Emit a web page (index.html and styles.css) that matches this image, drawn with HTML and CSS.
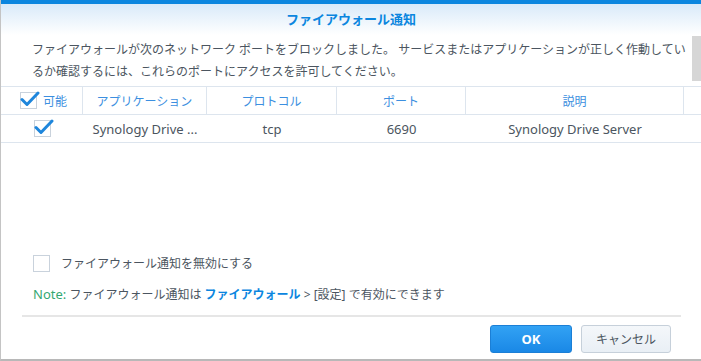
FILE: index.html
```html
<!DOCTYPE html>
<html>
  <head>
    <meta charset="utf-8">
    <title>ファイアウォール通知</title>
    <link rel="stylesheet" href="styles.css">
  </head>
  <body>
    <div class="dialog">
      <div class="topbar"></div>
      <header class="dlg-header">
        <h1 class="dlg-title">ファイアウォール通知</h1>
      </header>
      <div class="scroll-thumb"></div>

      <p class="desc">ファイアウォールが次のネットワーク ポートをブロックしました。 サービスまたはアプリケーションが正しく作動しているか確認するには、これらのポートにアクセスを許可してください。</p>

      <div class="grid">
        <div class="row head">
          <div class="cell c-enable">
            <span class="check">
              <svg width="20" height="18" viewBox="0 0 20 18"><rect x="0.5" y="1.5" width="16" height="16" fill="#fff" stroke="#c9d2dc"/><path d="M2 8.5 L7 13.5 L18 2" fill="none" stroke="#1e86dc" stroke-width="3" stroke-linecap="round" stroke-linejoin="round"/></svg>
            </span>
            可能
          </div>
          <div class="cell">アプリケーション</div>
          <div class="cell">プロトコル</div>
          <div class="cell">ポート</div>
          <div class="cell">説明</div>
          <div class="cell"></div>
        </div>
        <div class="row data">
          <div class="cell">
            <span class="check">
              <svg width="20" height="18" viewBox="0 0 20 18"><rect x="0.5" y="1.5" width="16" height="16" fill="#fff" stroke="#c9d2dc"/><path d="M2 8.5 L7 13.5 L18 2" fill="none" stroke="#1e86dc" stroke-width="3" stroke-linecap="round" stroke-linejoin="round"/></svg>
            </span>
          </div>
          <div class="cell">Synology Drive ...</div>
          <div class="cell">tcp</div>
          <div class="cell">6690</div>
          <div class="cell">Synology Drive Server</div>
          <div class="cell"></div>
        </div>
      </div>

      <div class="options">
        <label class="opt">
          <span class="box"></span>
          ファイアウォール通知を無効にする
        </label>
        <p class="note"><span class="note-tag">Note:</span> ファイアウォール通知は <b class="link">ファイアウォール</b> &gt; [設定] で有効にできます</p>
      </div>

      <div class="sep"></div>

      <footer class="dlg-footer">
        <button class="btn btn-ok">OK</button>
        <button class="btn btn-cancel">キャンセル</button>
      </footer>
    </div>
  </body>
</html>
```

FILE: styles.css
```css
* {
  box-sizing: border-box;
  margin: 0;
}
body {
  background: #fff;
  font-family: "Noto Sans", "Noto Sans CJK JP", sans-serif;
  font-size: 12px;
  color: #4b5560;
}
.dialog {
  position: relative;
  width: 701px;
  height: 361px;
  border-left: 1px solid #c4c4c4;
  border-bottom: 2px solid #b8b8b8;
  display: flex;
  flex-direction: column;
}
.topbar {
  height: 4px;
  background: #0b86df;
}
.dlg-header {
  height: 31px;
  background: linear-gradient(#d9eaf9, #ffffff);
  display: flex;
  align-items: center;
  justify-content: center;
}
.dlg-title {
  font-size: 13px;
  font-weight: 700;
  color: #0b86df;
  margin-top: -2px;
}
.scroll-thumb {
  position: absolute;
  right: 0;
  top: 36px;
  width: 9px;
  height: 45px;
  background: #d6d6d6;
}
.desc {
  padding: 4px 12px 0 31px;
  line-height: 22px;
  height: 51px;
}
.grid {
  border-top: 1px solid #dde5ee;
}
.row {
  display: grid;
  grid-template-columns: 82px 124px 130px 129px 218px 17px;
  border-bottom: 1px solid #dde5ee;
}
.row.head {
  height: 28px;
  color: #3c8fe0;
}
.row.data {
  height: 28px;
  font-size: 13px;
}
.cell {
  display: flex;
  align-items: center;
  justify-content: center;
  border-right: 1px solid #dde5ee;
  white-space: nowrap;
}
.row.data .cell {
  border-right: none;
  color: #4b5560;
}
.row.head .cell:last-child {
  border-right: none;
}
.c-enable {
  justify-content: flex-start;
  padding-left: 19px;
  gap: 3px;
}
.check {
  display: inline-flex;
  margin-top: -2px;
}
.row.data .cell:first-child {
  padding-left: 4px;
}
.options {
  padding: 111px 0 0 32px;
  height: 172px;
}
.opt {
  display: flex;
  align-items: center;
  gap: 11px;
  height: 18px;
}
.box {
  width: 17px;
  height: 17px;
  border: 1px solid #c9d2dc;
  background: #fff;
}
.note {
  margin-top: 13px;
  line-height: 18px;
}
.note-tag {
  color: #32a872;
  font-size: 13px;
}
.link {
  color: #0b86df;
  font-weight: 700;
}
.sep {
  margin: 0 20px 0 21px;
  height: 2px;
  background: #e6e6e6;
}
.dlg-footer {
  display: flex;
  justify-content: flex-end;
  gap: 9px;
  padding: 8px 30px 0 0;
}
.btn {
  height: 28px;
  border-radius: 3px;
  font-family: "Noto Sans", "Noto Sans CJK JP", sans-serif;
  font-size: 12px;
}
.btn-ok {
  width: 82px;
  background: linear-gradient(#32a2f4, #1a88e6);
  border: 1px solid #1b7fd6;
  color: #fff;
  font-weight: 700;
  font-size: 13px;
}
.btn-cancel {
  width: 90px;
  background: linear-gradient(#f4f7fa, #e9eff5);
  border: 1px solid #c6d0da;
  color: #4b5560;
}
```
